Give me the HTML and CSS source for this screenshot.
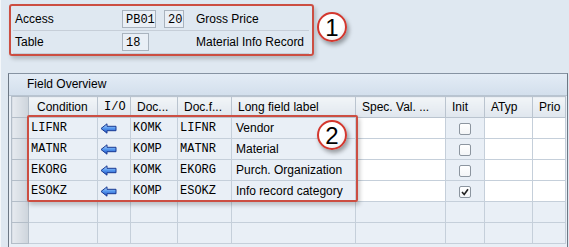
FILE: index.html
```html
<!DOCTYPE html>
<html lang="en">
<head>
  <meta charset="UTF-8">
  <title>Access Fields</title>
  <link rel="stylesheet" href="styles.css">
</head>
<body>
  <div class="screen">
    <section class="access">
      <div class="access-row">
        <span class="access-label">Access</span>
        <span class="access-fields">
          <span class="field field-wide">PB01</span>
          <span class="field field-short">20</span>
        </span>
        <span class="access-text">Gross Price</span>
      </div>
      <div class="access-row">
        <span class="access-label">Table</span>
        <span class="access-fields">
          <span class="field field-mid">18</span>
        </span>
        <span class="access-text">Material Info Record</span>
      </div>
    </section>

    <section class="overview">
      <div class="overview-title">Field Overview</div>
      <table class="grid">
        <colgroup>
          <col style="width:17px">
          <col style="width:69px">
          <col style="width:33px">
          <col style="width:47px">
          <col style="width:54px">
          <col style="width:124px">
          <col style="width:90px">
          <col style="width:39px">
          <col style="width:48px">
          <col style="width:33px">
        </colgroup>
        <thead>
          <tr>
            <th class="sel"></th>
            <th class="center">Condition</th>
            <th class="mono-head">I/O</th>
            <th>Doc...</th>
            <th>Doc.f...</th>
            <th>Long field label</th>
            <th>Spec. Val. ...</th>
            <th>Init</th>
            <th>ATyp</th>
            <th>Prio</th>
          </tr>
        </thead>
        <tbody>
          <tr>
            <td class="sel"></td>
            <td class="mono">LIFNR</td>
            <td class="io"><svg class="arrow" width="17" height="11" viewBox="0 0 17 11"><use href="#arrow-left"/></svg></td>
            <td class="mono">KOMK</td>
            <td class="mono">LIFNR</td>
            <td class="label">Vendor</td>
            <td class="edit"></td>
            <td class="check"><span class="box"></span></td>
            <td class="edit"></td>
            <td class="edit"></td>
          </tr>
          <tr>
            <td class="sel"></td>
            <td class="mono">MATNR</td>
            <td class="io"><svg class="arrow" width="17" height="11" viewBox="0 0 17 11"><use href="#arrow-left"/></svg></td>
            <td class="mono">KOMP</td>
            <td class="mono">MATNR</td>
            <td class="label">Material</td>
            <td class="edit"></td>
            <td class="check"><span class="box"></span></td>
            <td class="edit"></td>
            <td class="edit"></td>
          </tr>
          <tr>
            <td class="sel"></td>
            <td class="mono">EKORG</td>
            <td class="io"><svg class="arrow" width="17" height="11" viewBox="0 0 17 11"><use href="#arrow-left"/></svg></td>
            <td class="mono">KOMK</td>
            <td class="mono">EKORG</td>
            <td class="label">Purch. Organization</td>
            <td class="edit"></td>
            <td class="check"><span class="box"></span></td>
            <td class="edit"></td>
            <td class="edit"></td>
          </tr>
          <tr>
            <td class="sel"></td>
            <td class="mono">ESOKZ</td>
            <td class="io"><svg class="arrow" width="17" height="11" viewBox="0 0 17 11"><use href="#arrow-left"/></svg></td>
            <td class="mono">KOMP</td>
            <td class="mono">ESOKZ</td>
            <td class="label">Info record category</td>
            <td class="edit"></td>
            <td class="check"><span class="box"><svg width="10" height="10" viewBox="0 0 10 10"><path d="M2 5 L4.2 7.5 L8 2.2" fill="none" stroke="#222" stroke-width="1.6"/></svg></span></td>
            <td class="edit"></td>
            <td class="edit"></td>
          </tr>
          <tr class="empty">
            <td class="sel"></td><td></td><td></td><td></td><td></td><td></td><td></td><td></td><td></td><td></td>
          </tr>
          <tr class="empty">
            <td class="sel"></td><td></td><td></td><td></td><td></td><td></td><td></td><td></td><td></td><td></td>
          </tr>
        </tbody>
      </table>
    </section>

    <!-- annotations drawn over the screen -->
    <div class="callout"></div>
    <span class="marker marker-1">1</span>
    <span class="marker marker-2">2</span>

    <svg width="0" height="0" class="defs">
      <defs>
        <linearGradient id="arrowFill" x1="0" y1="0" x2="0" y2="1">
          <stop offset="0" stop-color="#cfe6ff"/>
          <stop offset="0.45" stop-color="#5a9cf0"/>
          <stop offset="1" stop-color="#1c4fc4"/>
        </linearGradient>
        <path id="arrow-left" d="M1 5.5 L7 0.8 L7 3.3 L16 3.3 L16 7.7 L7 7.7 L7 10.2 Z" fill="url(#arrowFill)" stroke="#1a3a93" stroke-width="1" stroke-linejoin="round"/>
      </defs>
    </svg>
  </div>
</body>
</html>
```

FILE: styles.css
```css
body {
  margin: 0;
  background-color: #dfe8f1;
  font-family: 'Liberation Sans', Arial, sans-serif;
  font-size: 12px;
  color: #000;
}

.screen {
  position: relative;
  width: 569px;
  height: 247px;
  overflow: hidden;
  box-sizing: border-box;
  border-left: 1px solid #f4f7fa;
  padding-top: 4px;
}

.defs {
  position: absolute;
}

/* access block */

.access {
  margin-left: 8px;
  width: 305px;
  height: 52px;
  box-sizing: border-box;
  border: 2px solid #cc4e42;
  border-radius: 3px;
  box-shadow: 2px 3px 4px rgba(0, 0, 0, 0.2);
  padding: 2px 3px 0 2px;
}

.access-row {
  display: grid;
  grid-template-columns: 109px 74px auto;
  align-items: center;
  height: 22px;
  border-bottom: 1px solid #c6ced8;
}

.access-label {
  padding-left: 2px;
}

.access-fields {
  display: flex;
  gap: 8px;
}

.field {
  height: 18px;
  line-height: 18px;
  box-sizing: border-box;
  border: 1px solid #a9b3be;
  background-color: #e9eff6;
  font-family: 'Liberation Mono', 'Courier New', monospace;
  font-size: 12px;
  padding-left: 3px;
}

.field-wide {
  width: 34px;
}

.field-short {
  width: 20px;
}

.field-mid {
  width: 27px;
}

/* field overview */

.overview {
  margin: 17px 0 0 7px;
  width: 560px;
  height: 180px;
  box-sizing: border-box;
  border-top: 1px solid #8693a2;
  border-left: 1px solid #6d7885;
  border-right: 1px solid #6d7885;
  background-color: #e9eff6;
}

.overview-title {
  height: 21px;
  line-height: 21px;
  padding-left: 18px;
  background: linear-gradient(#e3ecf6, #d3dfec);
  border-bottom: 1px solid #b8c4d1;
}

.grid {
  table-layout: fixed;
  border-collapse: collapse;
  margin-left: 2px;
  width: 554px;
}

.grid th,
.grid td {
  height: 20px;
  padding: 0;
  border: 1px solid #c5cfda;
  white-space: nowrap;
  overflow: hidden;
  text-align: left;
}

.grid th {
  font-weight: normal;
  padding-left: 6px;
  background: linear-gradient(#f2f5f8, #dfe6ee);
  border-color: #bac4cf;
}

.grid th.center {
  padding-left: 8px;
}

.grid th.mono-head {
  font-family: 'Liberation Mono', 'Courier New', monospace;
}

.grid .sel {
  padding: 0;
  background: linear-gradient(90deg, #e6eaef, #cdd4dc);
  border-color: #b3bdc8;
}

.grid td {
  background-color: #e9eff6;
}

.grid td.mono {
  font-family: 'Liberation Mono', 'Courier New', monospace;
  padding-left: 2px;
}

.grid td.io {
  padding-left: 2px;
}

.arrow {
  display: block;
}

.grid td.label {
  padding-left: 4px;
}

.grid td.edit {
  background-color: #fff;
}

.grid td.check {
  text-align: center;
}

.box {
  display: inline-flex;
  align-items: center;
  justify-content: center;
  width: 12px;
  height: 12px;
  box-sizing: border-box;
  border: 1px solid #8c959f;
  border-radius: 2px;
  background: linear-gradient(#fff, #f3f5f7);
  vertical-align: middle;
}

/* annotations */

.callout {
  position: absolute;
  left: 26px;
  top: 115px;
  width: 331px;
  height: 87px;
  box-sizing: border-box;
  border: 2px solid #cc4e42;
  border-radius: 2px;
  box-shadow: 2px 3px 4px rgba(0, 0, 0, 0.2);
}

.marker {
  position: absolute;
  width: 30px;
  height: 30px;
  box-sizing: border-box;
  border: 2px solid #d3372e;
  border-radius: 50%;
  background: radial-gradient(circle at 40% 35%, #fff 55%, #e4e4e4);
  box-shadow: 2px 3px 4px rgba(0, 0, 0, 0.35);
  text-align: center;
  line-height: 27px;
  font-size: 24px;
}

.marker-1 {
  left: 316px;
  top: 12px;
}

.marker-2 {
  left: 316px;
  top: 120px;
}
```
